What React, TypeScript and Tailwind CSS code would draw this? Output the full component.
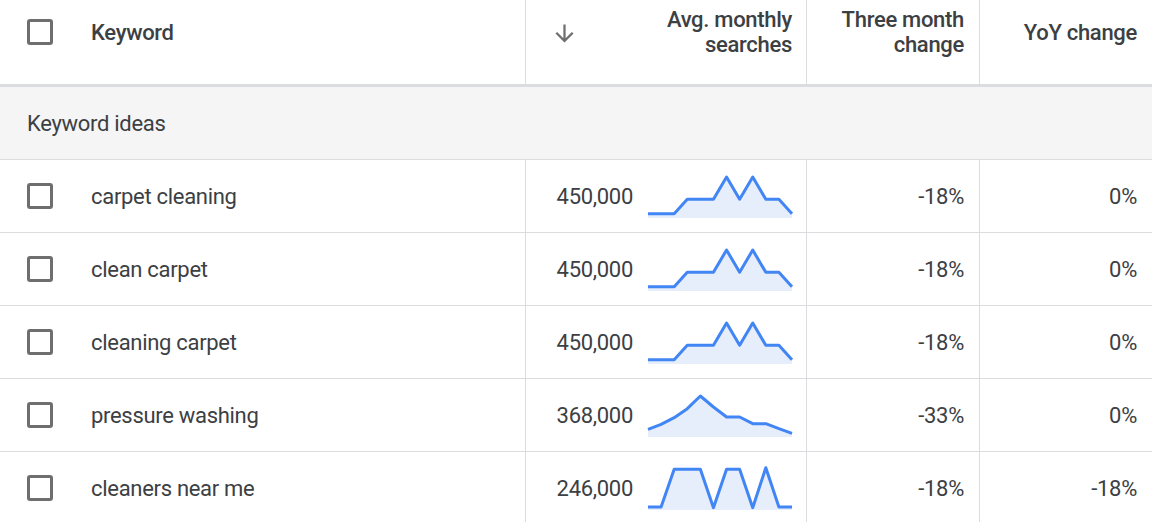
import React from "react";

const HIGH = [39.7, 39.7, 39.7, 25.3, 25.3, 25.3, 3, 25.3, 3, 25.3, 25.3, 39.7];
const PW = [36.3, 31.3, 24.7, 15.7, 3, 14, 24, 24, 30.7, 30.7, 35.7, 40.3];
const CN = [41, 41, 3.3, 3.3, 3.3, 41.7, 3.3, 3.3, 41.7, 1.7, 41, 41];

type Row = { kw: string; vol: string; three: string; yoy: string; data: number[] };

const rows: Row[] = [
  { kw: "carpet cleaning", vol: "450,000", three: "-18%", yoy: "0%", data: HIGH },
  { kw: "clean carpet", vol: "450,000", three: "-18%", yoy: "0%", data: HIGH },
  { kw: "cleaning carpet", vol: "450,000", three: "-18%", yoy: "0%", data: HIGH },
  { kw: "pressure washing", vol: "368,000", three: "-33%", yoy: "0%", data: PW },
  { kw: "cleaners near me", vol: "246,000", three: "-18%", yoy: "-18%", data: CN },
];

function Spark({ data }: { data: number[] }) {
  const w = 144;
  const h = 44;
  const step = w / (data.length - 1);
  const pts = data.map((y, i) => `${(i * step).toFixed(2)},${y}`).join(" ");
  const area = `0,${h} ${pts} ${w},${h}`;
  return (
    <svg width={w} height={h} viewBox={`0 0 ${w} ${h}`} className="block overflow-visible">
      <polygon points={area} fill="#e6eefc" />
      <polyline points={pts} fill="none" stroke="#4285f4" strokeWidth={3} strokeLinejoin="round" strokeLinecap="butt" />
    </svg>
  );
}

function Checkbox() {
  return <div className="w-[26px] h-[26px] border-[3px] border-[#6e6e6e] rounded-[3px] bg-white shrink-0" />;
}

export default function App() {
  return (
    <div
      className="w-[1152px] h-[522px] overflow-hidden bg-white text-[#3c4043] tracking-[-0.3px]"
      style={{ fontFamily: "Roboto, 'Noto Sans', sans-serif" }}
    >
      {/* Header */}
      <div className="grid grid-cols-[525px_281px_173px_1fr] h-[87px] border-b-[3px] border-[#dadce0] text-[22px] font-medium leading-[25px]">
        <div className="h-[64px] flex items-center pl-[27px]">
          <Checkbox />
          <span className="ml-[38px]">Keyword</span>
        </div>
        <div className="h-full border-l border-[#dadce0]">
          <div className="h-[64px] flex items-center pr-[14px]">
            <svg width="27" height="27" viewBox="0 0 24 24" className="ml-[25px] mt-[2px]">
              <path d="M20 12l-1.41-1.41L13 16.17V4h-2v12.17l-5.58-5.59L4 12l8 8 8-8z" fill="#6e6e6e" />
            </svg>
            <div className="ml-auto text-right">
              Avg. monthly
              <br />
              searches
            </div>
          </div>
        </div>
        <div className="h-full border-l border-[#dadce0]">
          <div className="h-[64px] flex items-center justify-end pr-[15px] text-right">
            <div>
              Three month
              <br />
              change
            </div>
          </div>
        </div>
        <div className="h-full border-l border-[#dadce0]">
          <div className="h-[64px] flex items-center justify-end pr-[15px]">YoY change</div>
        </div>
      </div>

      {/* Section */}
      <div className="h-[73px] bg-[#f5f5f5] border-b border-[#dadce0] flex items-center pl-[27px] text-[22px]">
        Keyword ideas
      </div>

      {/* Rows */}
      {rows.map((r) => (
        <div
          key={r.kw}
          className="grid grid-cols-[525px_281px_173px_1fr] h-[73px] border-b border-[#dadce0] text-[22px]"
        >
          <div className="flex items-center pl-[27px]">
            <Checkbox />
            <span className="ml-[38px]">{r.kw}</span>
          </div>
          <div className="flex items-center justify-end pr-[14px] border-l border-[#dadce0]">
            <span className="mr-[15px]">{r.vol}</span>
            <Spark data={r.data} />
          </div>
          <div className="flex items-center justify-end pr-[15px] border-l border-[#dadce0]">{r.three}</div>
          <div className="flex items-center justify-end pr-[15px] border-l border-[#dadce0]">{r.yoy}</div>
        </div>
      ))}
    </div>
  );
}
